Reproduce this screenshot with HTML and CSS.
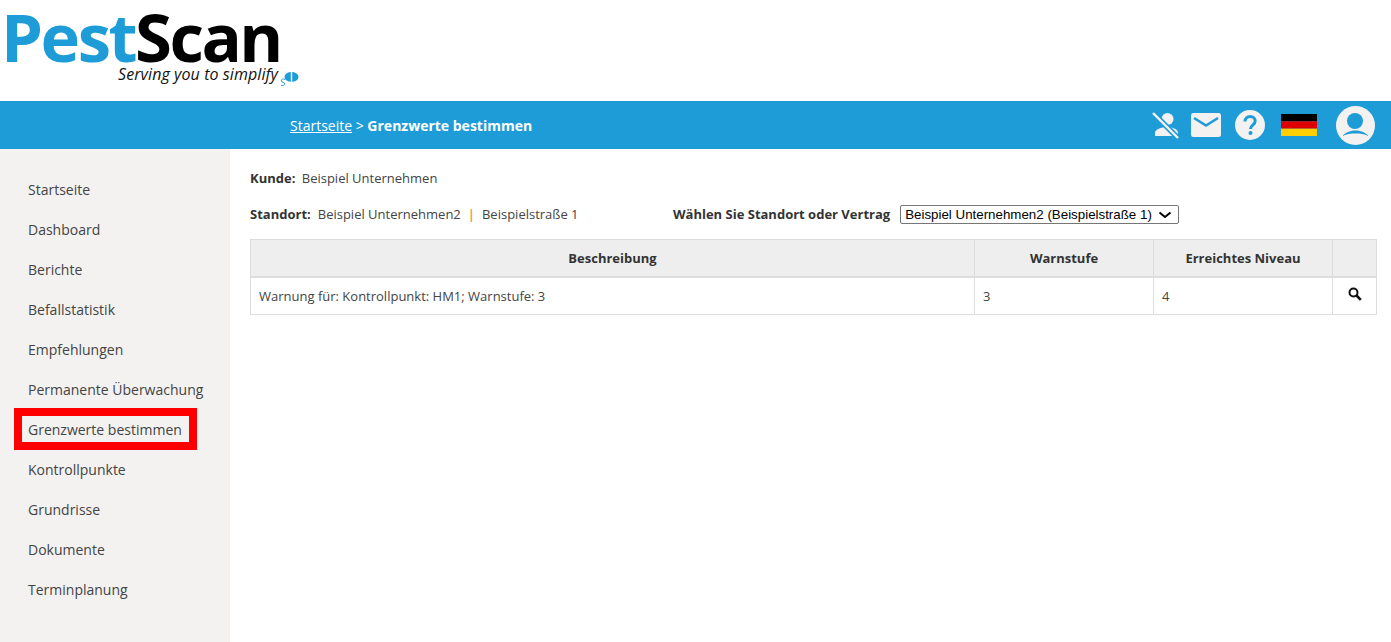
FILE: index.html
```html
<!DOCTYPE html>
<html lang="de">
<head>
<meta charset="utf-8">
<title>PestScan – Grenzwerte bestimmen</title>
<link rel="stylesheet" href="styles.css">
</head>
<body>
<header class="top">
  <div class="logo">
    <div class="logo-word"><span class="logo-pest">Pest</span><span class="logo-scan">Scan</span></div>
    <div class="logo-tag">
      <span>Serving you to simplify</span>
      <svg class="logo-mark" width="20" height="16" viewBox="0 0 20 16" aria-hidden="true">
        <path d="M6 8.500C4.500 7.500 2 8 2.300 10c.3 1.500 3.500 1 3.500 2.700S3.500 15 2 14.300" fill="none" stroke="#1e9cd8" stroke-width="1"/>
        <ellipse cx="12.500" cy="6" rx="7" ry="5" fill="#1e9cd8"/>
        <rect x="11.800" y="1" width="1.400" height="10" fill="#fff"/>
      </svg>
    </div>
  </div>
</header>
<div class="bar">
  <nav class="crumb"><a href="#">Startseite</a> &gt; <strong>Grenzwerte bestimmen</strong></nav>
  <div class="bar-icons">
    <svg class="i-user-off" width="28" height="28" viewBox="0 0 28 28" aria-hidden="true">
      <circle cx="15.500" cy="8" r="6" fill="#f3f2f1"/>
      <path d="M3 25v-3c0-3.500 6-6 12-6s11 2.500 11 6v3z" fill="#f3f2f1"/>
      <path d="M1 2l25 25" stroke="#1e9cd8" stroke-width="5.500"/>
      <path d="M1 2l25 25" stroke="#f3f2f1" stroke-width="2.400"/>
    </svg>
    <svg class="i-mail" width="30" height="24" viewBox="0 0 30 24" aria-hidden="true">
      <rect width="30" height="24" rx="2.500" fill="#f3f2f1"/>
      <path d="M3 5l12 7.500L27 5" fill="none" stroke="#1e9cd8" stroke-width="2.600"/>
    </svg>
    <svg class="i-help" width="30" height="30" viewBox="0 0 30 30" aria-hidden="true">
      <circle cx="15" cy="15" r="15" fill="#f3f2f1"/>
      <path d="M10 11.500c0-3 2.200-5 5.200-5s5 1.900 5 4.500c0 3.800-4.700 3.800-4.700 8" fill="none" stroke="#1e9cd8" stroke-width="3"/>
      <circle cx="15.500" cy="23" r="2" fill="#1e9cd8"/>
    </svg>
    <svg class="i-flag" width="36" height="22" viewBox="0 0 36 22" aria-hidden="true">
      <rect width="36" height="7.330" fill="#000"/>
      <rect y="7.330" width="36" height="7.340" fill="#dd0000"/>
      <rect y="14.670" width="36" height="7.330" fill="#ffce00"/>
    </svg>
    <svg class="i-avatar" width="39" height="39" viewBox="0 0 39 39" aria-hidden="true">
      <circle cx="19.500" cy="19.500" r="19.500" fill="#f3f2f1"/>
      <circle cx="19" cy="15" r="8" fill="#1e9cd8"/>
      <path d="M6.500 30C10 26 15 24.500 19.500 24.500S29 26 32.500 30C28.500 28 24 27.500 19.500 27.500S10.500 28 6.500 30z" fill="#1e9cd8"/>
    </svg>
  </div>
</div>
<div class="main">
  <aside class="side">
    <a href="#" class="item">Startseite</a>
    <a href="#" class="item">Dashboard</a>
    <a href="#" class="item">Berichte</a>
    <a href="#" class="item">Befallstatistik</a>
    <a href="#" class="item">Empfehlungen</a>
    <a href="#" class="item">Permanente Überwachung</a>
    <a href="#" class="item item-marked"><span class="mark">Grenzwerte bestimmen</span></a>
    <a href="#" class="item">Kontrollpunkte</a>
    <a href="#" class="item">Grundrisse</a>
    <a href="#" class="item">Dokumente</a>
    <a href="#" class="item">Terminplanung</a>
  </aside>
  <main class="content">
    <div class="line-kunde"><b>Kunde:</b> <span class="val-k">Beispiel Unternehmen</span></div>
    <div class="line-standort">
      <div class="standort"><b>Standort:</b><span class="val-s">Beispiel Unternehmen2</span><span class="pipe">|</span><span>Beispielstraße 1</span></div>
      <div class="chooser">
        <label for="loc">Wählen Sie Standort oder Vertrag</label>
        <div class="select-wrap">
          <select id="loc"><option>Beispiel Unternehmen2 (Beispielstraße 1)</option></select>
          <svg class="chev" width="14" height="8" viewBox="0 0 14 8" aria-hidden="true">
            <path d="M1.500 1.500L7 6l5.500-4.500" fill="none" stroke="#000" stroke-width="2"/>
          </svg>
        </div>
      </div>
    </div>
    <table class="grid">
      <colgroup><col class="c1"><col class="c2"><col class="c3"><col class="c4"></colgroup>
      <thead>
        <tr><th>Beschreibung</th><th>Warnstufe</th><th>Erreichtes Niveau</th><th></th></tr>
      </thead>
      <tbody>
        <tr>
          <td>Warnung für: Kontrollpunkt: HM1; Warnstufe: 3</td>
          <td>3</td>
          <td>4</td>
          <td class="cell-search">
            <svg width="14" height="14" viewBox="0 0 14 14" aria-hidden="true">
              <circle cx="5.500" cy="5.500" r="4" fill="none" stroke="#111" stroke-width="2"/>
              <path d="M8.500 8.500l4.300 4.300" stroke="#111" stroke-width="2.600"/>
            </svg>
          </td>
        </tr>
      </tbody>
    </table>
  </main>
</div>
</body>
</html>
```
FILE: styles.css
```css
* { box-sizing: border-box; }
html, body { margin: 0; padding: 0; height: 642px; overflow: hidden; }
body { font-family: "Open Sans", sans-serif; font-size: 13px; color: #444; background: #fff; display: flex; flex-direction: column; }
a { color: inherit; text-decoration: none; }

.top { height: 101px; padding: 0 0 0 1px; flex: none; }
.logo { width: 300px; }
.logo-word { font-size: 67px; font-weight: 700; line-height: 73px; letter-spacing: -2.500px; height: 71px; white-space: nowrap; }
.logo-pest { color: #1e9cd8; }
.logo-scan { color: #000; }
.logo-tag { display: flex; align-items: flex-end; padding-left: 117px; margin-top: -8px; font-size: 16px; line-height: 22px; font-style: italic; color: #111; letter-spacing: .08px; white-space: nowrap; }
.logo-mark { margin-left: 1px; margin-bottom: -2px; flex: none; }

.bar { height: 48px; flex: none; background: #1e9cd8; display: flex; align-items: center; padding-left: 290px; color: #fff; font-size: 14px; }
.crumb a { text-decoration: underline; }
.bar-icons { margin-left: auto; display: flex; align-items: center; padding-right: 16px; }
.i-user-off { margin-right: 11px; }
.i-mail { margin-right: 14px; }
.i-help { margin-right: 16px; }
.i-flag { margin-right: 19px; }

.main { flex: 1; display: flex; min-height: 0; }
.side { width: 230px; flex: none; background: #f3f2f1; padding-top: 21px; }
.item { display: block; height: 40px; line-height: 40px; padding-left: 28px; font-size: 14px; color: #444; }
.item-marked { position: relative; }
.mark { position: absolute; left: 14px; top: -2px; width: 183px; height: 42px; border: 8px solid #f00; padding-left: 6px; line-height: 28px; white-space: nowrap; }

.content { flex: 1; padding: 0 14px 0 20px; }
.line-kunde { margin-top: 20px; height: 18px; line-height: 18px; }
.line-kunde b, .standort b, .chooser label { color: #333; font-weight: 700; }
.val-k { margin-left: 3px; }
.line-standort { margin-top: 17px; height: 20px; display: flex; align-items: center; }
.standort { width: 423px; }
.val-s { margin-left: 7px; }
.pipe { color: #e8a33d; font-weight: 700; margin: 0 7px; }
.chooser { display: flex; align-items: center; }
.chooser label { margin-right: 10px; }
.select-wrap { position: relative; width: 279px; height: 19px; }
.select-wrap select { appearance: none; display: block; width: 100%; height: 100%; font-family: "Liberation Sans", sans-serif; font-size: 13.333px; color: #000; background: #fff; border: 1px solid #767676; border-radius: 2px; padding: 0 0 0 4px; }
.chev { position: absolute; right: 7px; top: 6px; pointer-events: none; }

.grid { margin-top: 15px; width: 1127px; table-layout: fixed; border-collapse: collapse; }
.c2 { width: 179px; }
.c3 { width: 179px; }
.c4 { width: 44px; }
.grid th { height: 37px; background: #eee; border: 1px solid #ddd; border-bottom-width: 2px; color: #333; font-weight: 700; text-align: center; padding: 0 8px; }
.grid td { height: 38px; border: 1px solid #ddd; padding: 0 8px; }
.cell-search { text-align: center; vertical-align: top; padding-top: 9px !important; line-height: 14px; }
```
